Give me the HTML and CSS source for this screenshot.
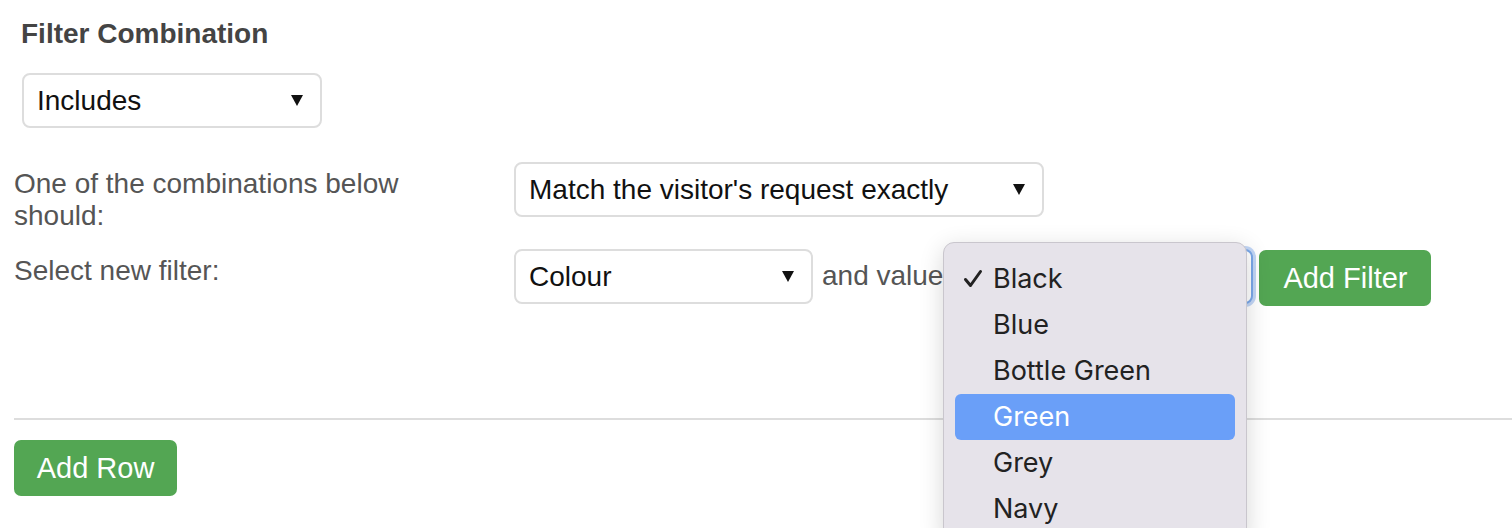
FILE: index.html
```html
<!DOCTYPE html>
<html>
<head>
<meta charset="utf-8">
<link rel="stylesheet" href="styles.css">
</head>
<body>
<div class="page">
  <section class="combo">
    <h2 class="heading">Filter Combination</h2>
    <div class="select sel-includes"><span>Includes</span><i class="arrow"></i></div>
  </section>

  <div class="row row-first">
    <div class="label">One of the combinations below should:</div>
    <div class="select sel-match"><span>Match the visitor's request exactly</span><i class="arrow"></i></div>
  </div>

  <div class="row">
    <div class="label">Select new filter:</div>
    <div class="filter-line">
      <div class="select sel-colour"><span>Colour</span><i class="arrow"></i></div>
      <span class="and">and value</span>
      <div class="select sel-value focused"></div>
      <button class="btn">Add Filter</button>
    </div>
  </div>

  <hr class="divider">

  <button class="btn btn-row">Add Row</button>

  <ul class="menu">
    <li class="item checked"><svg class="check" width="20" height="20" viewBox="0 0 20 20"><path d="M2.5 10.5 L7.5 16.5 L17.5 2.5" fill="none" stroke="#222" stroke-width="3" stroke-linecap="round" stroke-linejoin="round"/></svg>Black</li>
    <li class="item">Blue</li>
    <li class="item">Bottle Green</li>
    <li class="item active">Green</li>
    <li class="item">Grey</li>
    <li class="item">Navy</li>
  </ul>
</div>
</body>
</html>
```

FILE: styles.css
```css
* { box-sizing: border-box; }

html, body {
  margin: 0;
  padding: 0;
  background: #ffffff;
  overflow: hidden;
}

.page {
  position: relative;
  height: 528px;
  overflow: hidden;
  padding: 0 0 0 14px;
  font-family: "Liberation Sans", Arial, Helvetica, sans-serif;
  font-size: 28px;
  line-height: 32px;
  color: #555555;
}

.combo {
  padding: 18px 0 0 7px;
}

.heading {
  margin: 0;
  font-size: 28px;
  line-height: 32px;
  font-weight: bold;
  color: #444444;
}

.select {
  display: flex;
  align-items: center;
  justify-content: space-between;
  height: 55px;
  padding: 0 17px 0 13px;
  border: 2px solid #dddddd;
  border-radius: 8px;
  background: #ffffff;
  color: #111111;
  font-size: 28px;
}

.arrow {
  display: block;
  width: 0;
  height: 0;
  border-left: 6px solid transparent;
  border-right: 6px solid transparent;
  border-top: 11px solid #111111;
}

.sel-includes {
  width: 300px;
  margin: 23px 0 0 1px;
}

.row {
  display: flex;
  align-items: flex-start;
  margin-top: 17px;
}

.row-first {
  margin-top: 34px;
}

.label {
  width: 500px;
  flex: none;
  padding: 6px 80px 0 0;
}

.sel-match { width: 530px; }

.filter-line {
  display: flex;
  align-items: flex-start;
}

.sel-colour { width: 299px; }

.and {
  margin: 11px 8px 0 9px;
  color: #555555;
}

.sel-value {
  width: 302px;
}

.focused {
  border-color: #7aa7e8;
  box-shadow: 0 0 0 3px rgba(120, 165, 235, 0.45);
}

.btn {
  height: 56px;
  padding: 0 22px;
  border: none;
  border-radius: 7px;
  background: #53a653;
  color: #ffffff;
  font-family: "Liberation Sans", Arial, Helvetica, sans-serif;
  font-size: 29px;
  line-height: 32px;
}

.filter-line .btn {
  margin: 1px 0 0 6px;
  width: 172px;
  padding: 0;
}

.divider {
  margin: 112px 0 0 0;
  height: 2px;
  border: none;
  background: #dddddd;
}

.btn-row {
  display: block;
  margin-top: 20px;
  width: 163px;
  padding: 0;
}

.menu {
  position: absolute;
  left: 943px;
  top: 242px;
  width: 304px;
  height: 300px;
  margin: 0;
  padding: 13px 11px 0 11px;
  list-style: none;
  background: #e6e3ea;
  border: 1px solid #c9c6cd;
  border-radius: 11px;
  box-shadow: 0 6px 24px rgba(0, 0, 0, 0.16);
  font-family: Inter, "Noto Sans", sans-serif;
  font-size: 27px;
  color: #222222;
}

.item {
  position: relative;
  height: 46px;
  line-height: 46px;
  padding-left: 38px;
  border-radius: 6px;
}

.check {
  position: absolute;
  left: 8px;
  top: 13px;
}

.active {
  background: #6a9ff8;
  color: #ffffff;
}
```
